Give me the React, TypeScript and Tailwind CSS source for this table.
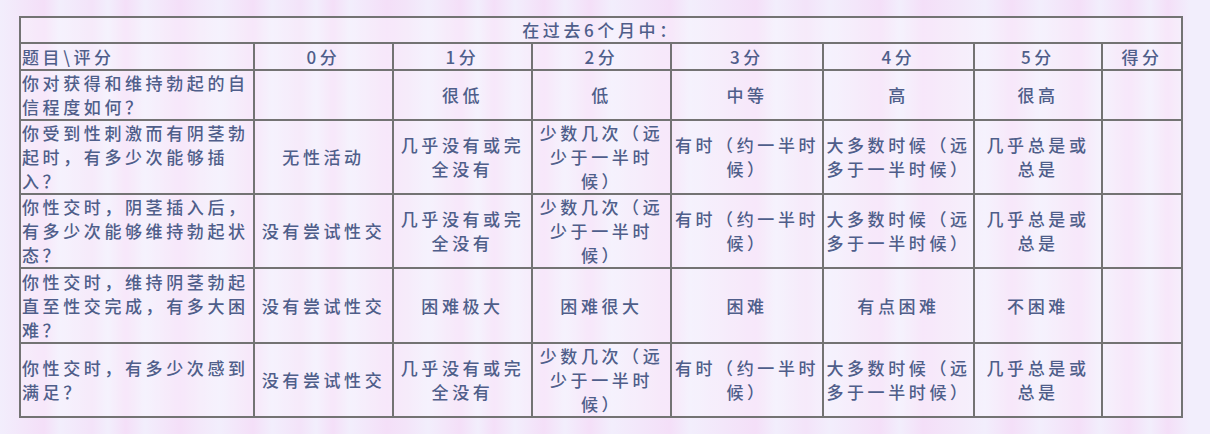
import React from 'react'

const cols = ['0分', '1分', '2分', '3分', '4分', '5分', '得分']

const rows: { q: string[]; cells: string[][]; h: string }[] = [
  {
    q: ['你对获得和维持勃起的自', '信程度如何？'],
    cells: [[], ['很低'], ['低'], ['中等'], ['高'], ['很高'], []],
    h: 'h-[50px]',
  },
  {
    q: ['你受到性刺激而有阴茎勃', '起时，有多少次能够插', '入？'],
    cells: [
      ['无性活动'],
      ['几乎没有或完', '全没有'],
      ['少数几次（远', '少于一半时', '候）'],
      ['有时（约一半时', '候）'],
      ['大多数时候（远', '多于一半时候）'],
      ['几乎总是或', '总是'],
      [],
    ],
    h: 'h-[73px]',
  },
  {
    q: ['你性交时，阴茎插入后，', '有多少次能够维持勃起状', '态？'],
    cells: [
      ['没有尝试性交'],
      ['几乎没有或完', '全没有'],
      ['少数几次（远', '少于一半时', '候）'],
      ['有时（约一半时', '候）'],
      ['大多数时候（远', '多于一半时候）'],
      ['几乎总是或', '总是'],
      [],
    ],
    h: 'h-[74px]',
  },
  {
    q: ['你性交时，维持阴茎勃起', '直至性交完成，有多大困', '难？'],
    cells: [['没有尝试性交'], ['困难极大'], ['困难很大'], ['困难'], ['有点困难'], ['不困难'], []],
    h: 'h-[75px]',
  },
  {
    q: ['你性交时，有多少次感到', '满足？'],
    cells: [
      ['没有尝试性交'],
      ['几乎没有或完', '全没有'],
      ['少数几次（远', '少于一半时', '候）'],
      ['有时（约一半时', '候）'],
      ['大多数时候（远', '多于一半时候）'],
      ['几乎总是或', '总是'],
      [],
    ],
    h: 'h-[74px]',
  },
]

function Lines({ lines }: { lines: string[] }) {
  return (
    <>
      {lines.map((l, i) => (
        <React.Fragment key={i}>
          {i > 0 && <br />}
          {l}
        </React.Fragment>
      ))}
    </>
  )
}

const cell = 'border-2 border-[#737373] p-0 align-middle'

export default function App() {
  return (
    <div className="w-[1210px] h-[434px] pl-[19px] pt-[16px] bg-[#f2eefc] bg-[linear-gradient(90deg,#f2eefc_0px,#f4dff8_44px,#f2eefc_60px,#f3e3f9_92px,#f2eefc_108px,#f4dff8_126px,#f2eefc_145px,#f4dff8_180px,#f3e8fa_200px,#f2eefc_220px,#f4dff8_253px,#f2eefc_272px,#f3e3f9_300px,#f2eefc_316px,#f4dff8_333px,#f2eefc_350px,#f4dff8_387px,#f3e4f9_406px,#f2eefc_428px,#f4dff8_460px,#f2eefc_478px,#f4dff8_494px,#f2eefc_515px,#f4dff8_544px,#f2eefc_565px,#f4dff8_590px,#f2eefc_612px,#f4dff8_670px,#f2eefc_690px,#f4dff8_756px,#f2eefc_776px,#f3e3f9_806px,#f2eefc_830px,#f4dff8_880px,#f2eefc_900px,#f4dff8_923px,#f3e8fa_962px,#f2eefc_985px,#f4dff8_1012px,#f2eefc_1040px,#f4dff8_1079px,#f2eefc_1100px,#f4dff8_1129px,#f2eefc_1150px,#f4dff8_1168px,#f2eefc_1190px)] font-['Noto_Sans_CJK_SC',sans-serif] text-[#4f5e8a]">
      <table className="w-[1162px] table-fixed border-collapse text-[17px] leading-[24px] tracking-[3.6px] font-medium bg-white/25">
        <colgroup>
          <col className="w-[234px]" />
          <col className="w-[139px]" />
          <col className="w-[139px]" />
          <col className="w-[139px]" />
          <col className="w-[152px]" />
          <col className="w-[151px]" />
          <col className="w-[128px]" />
          <col className="w-[80px]" />
        </colgroup>
        <tbody>
          <tr className="h-[26px]">
            <td colSpan={8} className={`${cell} text-center`}>
              在过去6个月中：
            </td>
          </tr>
          <tr className="h-[27px]">
            <td className={`${cell} pl-[1px] text-left`}>题目\评分</td>
            {cols.map(c => (
              <td key={c} className={`${cell} text-center`}>
                {c}
              </td>
            ))}
          </tr>
          {rows.map((r, i) => (
            <tr key={i} className={r.h}>
              <td className={`${cell} pl-[1px] text-left whitespace-nowrap`}>
                <Lines lines={r.q} />
              </td>
              {r.cells.map((c, j) => (
                <td key={j} className={`${cell} text-center whitespace-nowrap`}>
                  <Lines lines={c} />
                </td>
              ))}
            </tr>
          ))}
        </tbody>
      </table>
    </div>
  )
}
